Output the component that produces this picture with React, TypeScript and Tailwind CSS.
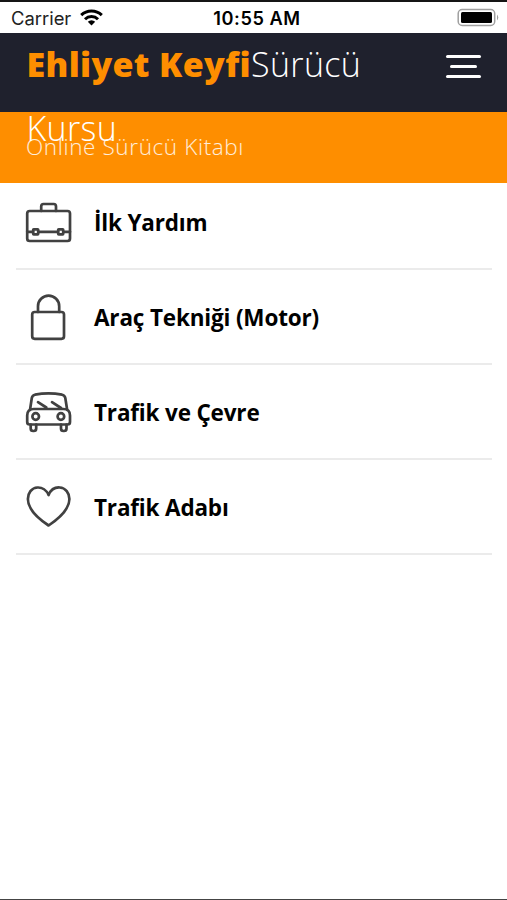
import React from 'react';

interface Lesson {
  title: string;
  icon: React.ReactNode;
}

const lessons: Lesson[] = [
  {
    title: 'İlk Yardım',
    icon: (
      <>
        <rect x="3.2" y="7" width="42.8" height="30" rx="2.5" />
        <path d="M17.2 7V2.5Q17.2 0 19.5 0H29.8Q32 0 32 2.5V7M3.2 27.8H9M14.4 27.8H34M39.4 27.8H46" />
        <rect x="9.2" y="25.3" width="5" height="5" rx="0.5" />
        <rect x="34.2" y="25.3" width="5" height="5" rx="0.5" />
      </>
    ),
  },
  {
    title: 'Araç Tekniği (Motor)',
    icon: (
      <>
        <rect x="8.2" y="13" width="31.8" height="26.8" rx="2.5" />
        <path d="M14 13V7.3A10.6 10.6 0 0 1 35.2 7.3V13" />
      </>
    ),
  },
  {
    title: 'Trafik ve Çevre',
    icon: (
      <>
        <path d="M6 16L7.8 4Q8.3 1.3 11 .7Q24.5-1.8 38 .7Q40.8 1.3 41.3 4L43.2 16" />
        <path d="M3.2 28V21.5Q3.2 15 9.7 15H39.5Q46 15 46 21.5V28Q46 30.5 43.5 30.5H5.7Q3.2 30.5 3.2 28Z" />
        <path d="M6.7 30.5V34.5Q6.7 37 9.2 37H9.7Q12.2 37 12.2 34.5V30.5M37 30.5V34.5Q37 37 39.5 37H40Q42.5 37 42.5 34.5V30.5" />
        <circle cx="11.7" cy="22.5" r="3.3" />
        <circle cx="36.9" cy="22.5" r="3.3" />
        <path d="M14 8.2L22.3 13.5M28 8.2L37 14" />
      </>
    ),
  },
  {
    title: 'Trafik Adabı',
    icon: <path d="M24.6 6C22.5 1 18-1.8 13.5-1.5C7.5-1.2 3.9 4 3.9 10C3.9 21 14 29.5 24.6 36.5C35 29.5 45.4 21 45.4 10C45.4 4 41.5-1.2 35.7-1.5C31-1.8 26.7 1 24.6 6Z" />,
  },
];

const StatusBar: React.FC = () => (
  <div className="grid h-[33px] grid-cols-3 items-center border-t-2 border-[#151515] bg-white pl-[11px] pr-[8px] pt-[2px] font-['Inter',sans-serif] text-black">
    <div className="flex items-center gap-[9px]">
      <span className="text-[18.4px] leading-none text-[#222]">Carrier</span>
      <svg className="-mt-[3px] h-[17px] w-[23px]" viewBox="0 0 23 17" fill="none" stroke="currentColor" strokeWidth="3">
        <path d="M1.2 6.2A14.8 14.8 0 0 1 21.8 6.2M5 10.2A9.3 9.3 0 0 1 18 10.2" />
        <path d="M7.8 12.7A5.2 5.2 0 0 1 15.2 12.7L11.5 16.5Z" fill="currentColor" stroke="none" />
      </svg>
    </div>
    <span className="whitespace-nowrap pl-1 text-center text-[18.2px] font-semibold leading-none tracking-[0.55px]">10:55 AM</span>
    <svg className="-mt-[2px] h-[19px] w-[42px] justify-self-end" viewBox="0 0 42 19" fill="none">
      <rect x="1.2" y="1.5" width="36.5" height="16" rx="4" stroke="#a0a0a0" strokeWidth="1.5" />
      <rect x="4" y="4" width="31" height="11" rx="1.5" fill="#000" />
      <path d="M40 6.5Q42.5 9.5 40 12.5Z" fill="#a0a0a0" />
    </svg>
  </div>
);

const App: React.FC = () => {
  return (
    <div className="flex h-[900px] w-[507px] flex-col overflow-hidden border-b border-[#444] bg-white font-['Open_Sans',sans-serif]">
      <StatusBar />

      {/* The title is taller than the bar and runs on over the banner */}
      <header className="relative z-20 flex h-[79px] shrink-0 items-start justify-between bg-[#1f212d] pl-[26px] pr-[26px]">
        <h1 className="w-[350px] pl-[0.5px] text-[34px] font-light leading-[63.5px] tracking-[0.35px] text-white">
          <span className="font-extrabold text-[#fe8e00]">Ehliyet Keyfi</span>Sürücü Kursu
        </h1>
        <button className="mt-[22px] flex w-[35px] flex-col items-center gap-[7px]" aria-label="Menü">
          <span className="h-[3px] w-full rounded-full bg-white"></span>
          <span className="h-[3px] w-[27px] rounded-full bg-white"></span>
          <span className="h-[3px] w-full rounded-full bg-white"></span>
        </button>
      </header>

      <div className="relative z-10 flex h-[71px] shrink-0 items-center bg-[#fe8e00] pb-[2px] pl-[26px]">
        <p className="text-[22.5px] font-light leading-[30px] tracking-[0.62px] text-white/85">Online Sürücü Kitabı</p>
      </div>

      <ul className="-mt-2 px-4">
        {lessons.map((lesson) => (
          <li key={lesson.title} className="mr-[-1px] flex h-[95px] items-center border-b-2 border-[#ebebeb] pl-2 pt-[2px]">
            <svg className="h-[48px] w-[48px] shrink-0" viewBox="0 -5 48 48" fill="none" stroke="#414141" strokeWidth="2.7" strokeLinejoin="round" strokeLinecap="round">
              {lesson.icon}
            </svg>
            <span className="ml-[22px] text-[22.5px] font-bold leading-[30px] tracking-[-0.17px] text-black">{lesson.title}</span>
          </li>
        ))}
      </ul>
    </div>
  );
};

export default App;
